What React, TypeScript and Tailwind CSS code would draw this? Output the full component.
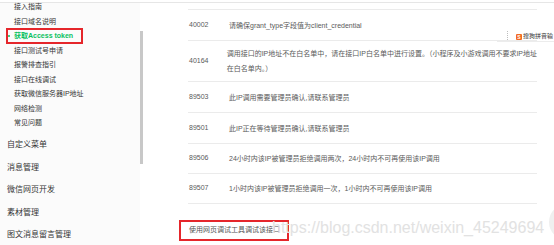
import React from "react";

const subItems = [
  "接入指南",
  "接口域名说明",
  "获取Access token",
  "接口测试号申请",
  "报警排查指引",
  "接口在线调试",
  "获取微信服务器IP地址",
  "网络检测",
  "常见问题",
];

const topItems = ["自定义菜单", "消息管理", "微信网页开发", "素材管理", "图文消息留言管理"];

const rows: { code: string; lines: string[]; h: string }[] = [
  { code: "40002", lines: ["请确保grant_type字段值为client_credential"], h: "h-[31px]" },
  {
    code: "40164",
    lines: [
      "调用接口的IP地址不在白名单中，请在接口IP白名单中进行设置。（小程序及小游戏调用不要求IP地址",
      "在白名单内。）",
    ],
    h: "h-[41px]",
  },
  { code: "89503", lines: ["此IP调用需要管理员确认,请联系管理员"], h: "h-[31px]" },
  { code: "89501", lines: ["此IP正在等待管理员确认,请联系管理员"], h: "h-[31px]" },
  { code: "89506", lines: ["24小时内该IP被管理员拒绝调用两次，24小时内不可再使用该IP调用"], h: "h-[30px]" },
  { code: "89507", lines: ["1小时内该IP被管理员拒绝调用一次，1小时内不可再使用该IP调用"], h: "h-[30px]" },
];

export default function App() {
  return (
    <div className="relative w-[554px] h-[245px] overflow-hidden bg-white font-['Liberation_Sans','Noto_Sans_CJK_SC',sans-serif]">
      <div className="h-[2px]" />
      <div className="h-px bg-[#e6e6e6]" />
      <div className="flex h-[242px]">
        <aside className="w-[140px] bg-[#fbfbfb]">
          <ul className="-mt-[3px]">
            {subItems.map((t) =>
              t === "获取Access token" ? (
                <li key={t} className="h-[14.5px] flex items-center text-[7px] font-bold text-[#07c160] whitespace-nowrap">
                  <span className="w-[2px] h-[2px] rounded-full bg-[#07c160] ml-[8px] mr-[4px]" />
                  {t}
                </li>
              ) : (
                <li key={t} className="h-[14.5px] flex items-center pl-[14px] text-[7px] text-[#353535] whitespace-nowrap">
                  {t}
                </li>
              )
            )}
          </ul>
          <ul className="mt-[3.5px]">
            {topItems.map((t) => (
              <li key={t} className="h-[22.5px] flex items-center pl-[7px] text-[8px] text-[#353535] whitespace-nowrap">
                {t}
              </li>
            ))}
          </ul>
        </aside>
        <div className="w-[3px]">
          <div className="mt-[28px] h-[133px] bg-[#c8c8c8]" />
        </div>
        <main className="flex-1 pl-[45px] pt-[6px]">
          <div className="w-[349px] border-t border-[#ebebeb]">
            {rows.map((r) => (
              <div key={r.code} className={`${r.h} flex items-center border-b border-[#ebebeb] text-[7px] text-[#5a5a5a]`}>
                <div className="w-[41px] pl-px">{r.code}</div>
                <div className="flex-1 leading-[15px] whitespace-nowrap">
                  {r.lines.map((l, i) => (
                    <div key={i}>{l}</div>
                  ))}
                </div>
              </div>
            ))}
          </div>
          <div className="mt-[16px] -ml-[9px] w-[110px] h-[21px] border-2 border-[#e5262b] flex items-center pl-[8px] text-[7px] text-[#555] whitespace-nowrap">
            使用网页调试工具调试该接口
          </div>
        </main>
      </div>

      {/* annotation box around active sidebar item */}
      <div className="absolute left-[6px] top-[28px] w-[77px] h-[16px] border-2 border-[#e5262b]" />

      {/* sogou input widget */}
      <div className="absolute left-[507px] top-[31px] w-[47px] h-[11px] flex items-center border-l border-dotted border-[#bdbdbd] pl-[8px] overflow-hidden">
        <span className="w-[6px] h-[6px] rounded-[1px] bg-[#f26a21] text-white text-[5px] font-bold leading-[6px] text-center mr-[1px] shrink-0">S</span>
        <span className="text-[6px] text-[#333] whitespace-nowrap">搜狗拼音输</span>
      </div>
      <div className="absolute left-[497px] top-[41px] w-[57px] h-px bg-[#ececec]" />

      {/* watermark */}
      <div className="absolute left-[272px] top-[219px] text-[16px] leading-[18px] text-[#e2e2e2] whitespace-nowrap pointer-events-none">
        https://blog.csdn.net/weixin_45249694
      </div>

      {/* floating circle */}
      <div className="absolute left-[549px] top-[204px] w-[36px] h-[36px] rounded-full bg-[#efefef]" />
    </div>
  );
}
